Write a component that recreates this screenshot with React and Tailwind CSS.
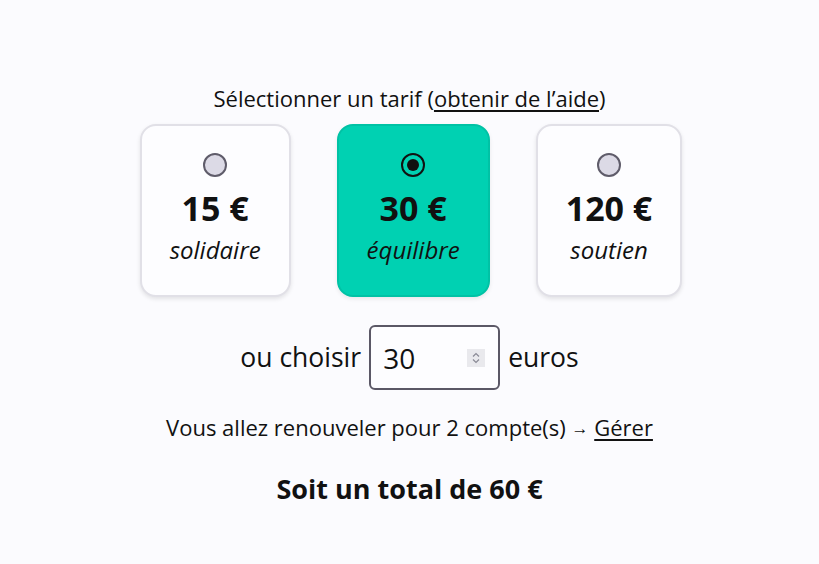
import React from "react";

function Radio({ checked }) {
  if (checked) {
    return (
      <span className="flex h-6 w-6 items-center justify-center rounded-full border-2 border-[#111111]">
        <span className="h-[12px] w-[12px] rounded-full bg-[#111111]" />
      </span>
    );
  }
  return <span className="block h-6 w-6 rounded-full border-2 border-[#5f5c6a] bg-[#dcdae6]" />;
}

function Card({ price, label, checked }) {
  return (
    <div
      className={
        "flex flex-col items-center rounded-[16px] border-2 px-[28px] pt-[27px] pb-[27px] " +
        (checked
          ? "border-[#00c2a5] bg-[#00d1b2] shadow-[0_2px_4px_rgba(0,0,0,0.08)]"
          : "border-[#e1e0e7] bg-[#fdfdff] shadow-[0_2px_4px_rgba(0,0,0,0.1)]")
      }
    >
      <Radio checked={checked} />
      <div className="mt-[11px] text-[34px] font-bold leading-[40px] whitespace-nowrap">{price}</div>
      <div className="mt-[4px] text-[24px] italic leading-[36px] whitespace-nowrap">{label}</div>
    </div>
  );
}

export default function App() {
  return (
    <div
      className="flex min-h-[564px] w-full flex-col items-center bg-[#fbfbfe] pt-[83px] text-[#111111]"
      style={{ fontFamily: '"Open Sans", "Noto Sans", sans-serif' }}
    >
      <div className="text-[22px] leading-[30px]">
        Sélectionner un tarif (<span className="underline underline-offset-[3px]">obtenir de l’aide</span>)
      </div>
      <div className="mt-[11px] flex items-start gap-[46px] pl-[3px]">
        <Card price="15 €" label="solidaire" />
        <Card price="30 €" label="équilibre" checked />
        <Card price="120 €" label="soutien" />
      </div>
      <div className="mt-[28px] flex items-center gap-[8px] text-[26.5px]">
        <span>ou choisir</span>
        <div className="flex h-[65px] w-[131px] items-center rounded-[6px] border-2 border-[#5b5866] bg-[#fdfdff] pl-[12px] pr-[13px]">
          <span className="flex-1 text-[28px]">30</span>
          <span className="flex h-[18px] w-[18px] flex-col items-center justify-center bg-[#e9e9ed]">
            <svg width="10" height="14" viewBox="0 0 10 14" fill="none" stroke="#8a8a96" strokeWidth="1.2">
              <path d="M2 5.5 L5 2.5 L8 5.5" />
              <path d="M2 8.5 L5 11.5 L8 8.5" />
            </svg>
          </span>
        </div>
        <span>euros</span>
      </div>
      <div className="mt-[22px] text-[22px] leading-[30px]">
        Vous allez renouveler pour 2 compte(s) <span className="relative top-[-2px] text-[17px]">→</span>{" "}
        <span className="underline underline-offset-[3px]">Gérer</span>
      </div>
      <div className="mt-[26px] text-[27px] font-bold leading-[36px]">Soit un total de 60 €</div>
    </div>
  );
}
